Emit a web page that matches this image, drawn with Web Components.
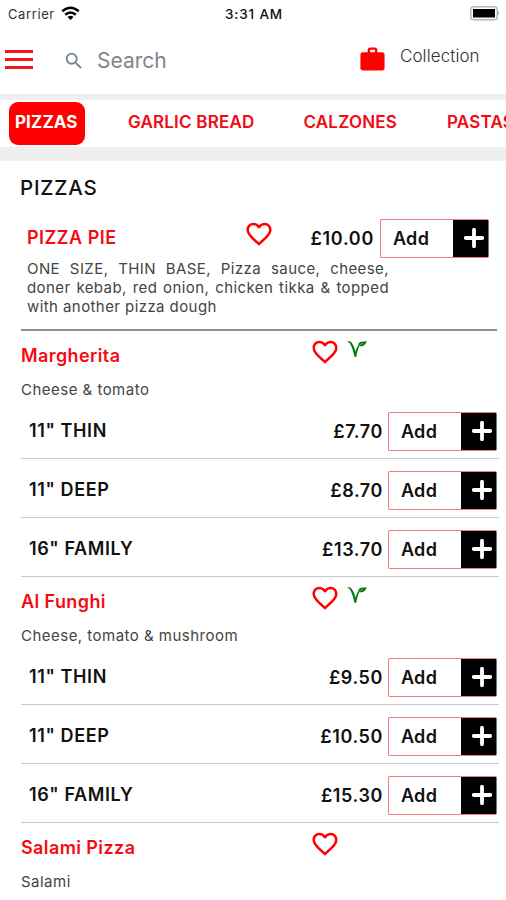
<!DOCTYPE html>
<html lang="en">
<head>
<meta charset="utf-8">
<title>Menu</title>
<style>
html,body{margin:0;height:900px;overflow:hidden;background:#fff}
body{font-family:Inter,"Liberation Sans",sans-serif;color:#111}
</style>
</head>
<body>
<menu-app></menu-app>
<script>
const define = (name, html, setup) => {
  const tpl = document.createElement('template');
  tpl.innerHTML = '<style>*{box-sizing:border-box}svg{display:block;flex:none}</style>' + html;
  customElements.define(name, class extends HTMLElement {
    connectedCallback() {
      if (this.shadowRoot) return;
      const root = this.attachShadow({mode: 'open'});
      root.append(tpl.content.cloneNode(true));
      if (setup) setup(this, root);
    }
  });
};

define('status-bar', `<style>
:host{display:grid;grid-template-columns:1fr auto 1fr;align-items:center;height:27px;padding:0 6px 0 8px;font-size:13px;line-height:16px;color:#333}
.left{display:flex;align-items:center;gap:6px;letter-spacing:.6px}
.time{font-weight:500;font-size:13.5px;letter-spacing:.85px;color:#111}
svg:last-child{justify-self:end}
</style>
<div class="left"><span>Carrier</span>
<svg width="19" height="15" viewBox="0 0 19 15"><g fill="none" stroke="#000" stroke-width="2.5"><path d="M1.2 5.2Q9.5-1.8 17.8 5.2"/><path d="M4.2 8.7Q9.5 4.2 14.8 8.7"/></g><path d="M6.5 11Q9.5 8.6 12.5 11L9.5 14Z"/></svg></div>
<span class="time">3:31 AM</span>
<svg width="30" height="15" viewBox="0 0 30 15"><rect x=".75" y=".75" width="26.500" height="13" rx="3" fill="#fff" stroke="#b5b5b5" stroke-width="1.500"/><rect x="3" y="3" width="22" height="8.500" fill="#000"/><path d="M28 5Q30 7.200 28 9.500Z" fill="#aaa"/></svg>`);

define('search-bar', `<style>
:host{display:flex;height:67px;padding-left:5px;align-items:flex-start}
.burger{display:flex;flex-direction:column;gap:5px;width:28px;padding-top:23px}
.burger i{height:3px;background:#f0141b}
.glass{margin:23px 0 0 30px}
.q{margin:21px 0 0 12px;width:263px;font-size:21px;line-height:26px;color:#7d858d}
.bag{margin-top:18px;margin-left:-2px}
.mode{margin:18px 0 0 13px;font-size:17px;line-height:22px;color:#333;font-weight:300;letter-spacing:.08px}
</style>
<div class="burger"><i></i><i></i><i></i></div>
<svg class="glass" width="22" height="22" viewBox="0 0 24 24" fill="#78828b"><path d="M15.5 14h-.79l-.28-.27A6.471 6.471 0 0 0 16 9.5 6.5 6.5 0 1 0 9.5 16c1.61 0 3.09-.59 4.23-1.57l.27.28v.79l5 4.99L20.49 19l-4.99-5zm-6 0C7.01 14 5 11.99 5 9.500S7.01 5 9.500 5 14 7.010 14 9.500 11.990 14 9.500 14z"/></svg>
<span class="q">Search</span>
<svg class="bag" width="29" height="29" viewBox="0 0 24 24" fill="#f00"><path d="M20 6h-4V4c0-1.110-.89-2-2-2h-4c-1.110 0-2 .89-2 2v2H4c-1.110 0-1.990.89-1.990 2L2 19c0 1.110.89 2 2 2h16c1.110 0 2-.89 2-2V8c0-1.110-.89-2-2-2zm-6 0h-4V4h4v2z"/></svg>
<span class="mode">Collection</span>`);

define('category-tabs', `<style>
:host{display:flex;gap:43px;height:67px;border-top:6px solid #efefef;border-bottom:14px solid #efefef;padding:2px 0 0 9px;overflow:hidden;white-space:nowrap}
</style><slot></slot>`);

define('category-tab', `<style>
:host{flex:none;height:43px;padding-top:9px;font-size:17px;line-height:22px;font-weight:600;letter-spacing:.2px;color:#f00a12}
:host([active]){width:76px;border-radius:9px;background:#f00;color:#fff;font-weight:700;padding-left:6px;letter-spacing:.1px}
</style><slot></slot>`);

define('heart-icon', `<style>:host{display:block;width:30px;height:30px}</style>
<svg width="30" height="30" viewBox="0 0 24 24" fill="#f00"><path d="M16.500 3c-1.740 0-3.410.81-4.500 2.090C10.910 3.810 9.240 3 7.500 3 4.420 3 2 5.420 2 8.500c0 3.780 3.400 6.860 8.550 11.540L12 21.350l1.450-1.320C18.600 15.360 22 12.280 22 8.500 22 5.420 19.580 3 16.500 3zm-4.400 15.550l-.1.1-.1-.1C7.140 14.240 4 11.390 4 8.500 4 6.500 5.500 5 7.500 5c1.540 0 3.040.99 3.570 2.360h1.870C13.460 5.990 14.960 5 16.500 5c2 0 3.500 1.500 3.500 3.500 0 2.890-3.140 5.740-7.900 10.050z"/></svg>`);

define('veg-icon', `<style>:host{display:block;width:20px;height:18px}</style>
<svg width="20" height="18" viewBox="0 0 20 18"><path d="M0 1L3.600 1.400Q7 5 8.400 11.500Q9.600 7.500 11.300 5.200Q11.300 2.400 14 1.700L19.800 1.200Q18.800 4.500 16.500 5.700Q14 6.900 12.500 5.900Q10.300 9.500 9.300 17L7.300 16.500Q5.700 8 2.800 3.200Z" fill="#087a12"/><path d="M12.300 5.600Q14 3.800 16 3.300" fill="none" stroke="#9ccf9f" stroke-width=".6"/></svg>`);

define('add-button', `<style>
:host{display:flex;flex:none;width:109px;height:39px;border:1px solid #f37c7c;border-right-color:#777;border-radius:2px;font-size:18px;font-weight:600;letter-spacing:.3px;line-height:22px}
span{flex:1;padding:8px 0 0 12px}
.plus{width:35px;background:#000;padding:8px 0 0 11px}
</style><span>Add</span><div class="plus"><svg width="20" height="20" viewBox="0 0 20 20"><path d="M10 1.800V18.200M1.800 10H18.200" stroke="#fff" stroke-width="3.800" stroke-linecap="round"/></svg></div>`);

define('featured-item', `<style>
:host{display:block;height:121px;margin:0 9px 0 21px;padding:9px 0 0 6px;border-bottom:2px solid #8f8f8f}
.top{display:flex;height:40px}
h3{margin:8px 0 0;width:217px;font-size:18px;line-height:22px;font-weight:600;letter-spacing:.5px;color:#f60a12}
.price{width:100px;margin-top:9px;text-align:right;font-size:18px;line-height:22px;font-weight:600;letter-spacing:.7px}
add-button{margin:0 0 0 6px}
p{margin:0;width:362px;font-size:15px;line-height:19px;letter-spacing:.42px;color:#444;text-align:justify}
</style><div class="top"><h3></h3><heart-icon></heart-icon><span class="price"></span><add-button></add-button></div><p><slot></slot></p>`, (el, r) => {
  r.querySelector('h3').textContent = el.getAttribute('name');
  r.querySelector('.price').textContent = el.getAttribute('price');
});

define('menu-item', `<style>
:host{display:block;margin:0 7px 0 21px}
header{display:flex;height:41px;align-items:flex-start}
h3{margin:14px 0 0;width:289px;font-size:18px;line-height:22px;font-weight:600;letter-spacing:.4px;color:#f60a12}
heart-icon{margin-top:6px}
veg-icon{margin:9px 0 0 7px}
:host(:not([veg])) veg-icon{display:none}
p{margin:0;height:28px;padding-top:8px;font-size:15px;line-height:20px;letter-spacing:.48px;color:#444}
</style><header><h3></h3><heart-icon></heart-icon><veg-icon></veg-icon></header><p></p><slot></slot>`, (el, r) => {
  r.querySelector('h3').textContent = el.getAttribute('name');
  r.querySelector('p').textContent = el.getAttribute('note');
});

define('size-row', `<style>
:host{display:flex;height:59px;padding:12px 2px 0 8px;border-bottom:1px solid #c9c9c9;font-size:18px;line-height:22px;font-weight:600}
.size{flex:1;padding-top:8px;letter-spacing:.6px}
.price{padding-top:9px;margin-right:5px;letter-spacing:.6px}
</style><span class="size"><slot></slot></span><span class="price"></span><add-button></add-button>`, (el, r) => {
  r.querySelector('.price').textContent = el.getAttribute('price');
});

define('menu-app', `<style>
:host{display:block;width:506px;height:900px;overflow:hidden;background:#fff}
h2{margin:0;height:49px;padding:14px 0 0 20px;font-size:20.5px;line-height:25px;font-weight:500;letter-spacing:.8px}
</style>
<status-bar></status-bar>
<search-bar></search-bar>
<category-tabs><category-tab active>PIZZAS</category-tab><category-tab>GARLIC BREAD</category-tab><category-tab style="margin-left:6px">CALZONES</category-tab><category-tab style="margin-left:7px">PASTAS</category-tab></category-tabs>
<h2>PIZZAS</h2>
<featured-item name="PIZZA PIE" price="£10.00">ONE SIZE, THIN BASE, Pizza sauce, cheese, doner kebab, red onion, chicken tikka &amp; topped with another pizza dough</featured-item>
<menu-item name="Margherita" note="Cheese &amp; tomato" veg><size-row price="£7.70">11" THIN</size-row><size-row price="£8.70">11" DEEP</size-row><size-row price="£13.70">16" FAMILY</size-row></menu-item>
<menu-item name="Al Funghi" note="Cheese, tomato &amp; mushroom" veg><size-row price="£9.50">11" THIN</size-row><size-row price="£10.50">11" DEEP</size-row><size-row price="£15.30">16" FAMILY</size-row></menu-item>
<menu-item name="Salami Pizza" note="Salami"></menu-item>`);
</script>
</body>
</html>
